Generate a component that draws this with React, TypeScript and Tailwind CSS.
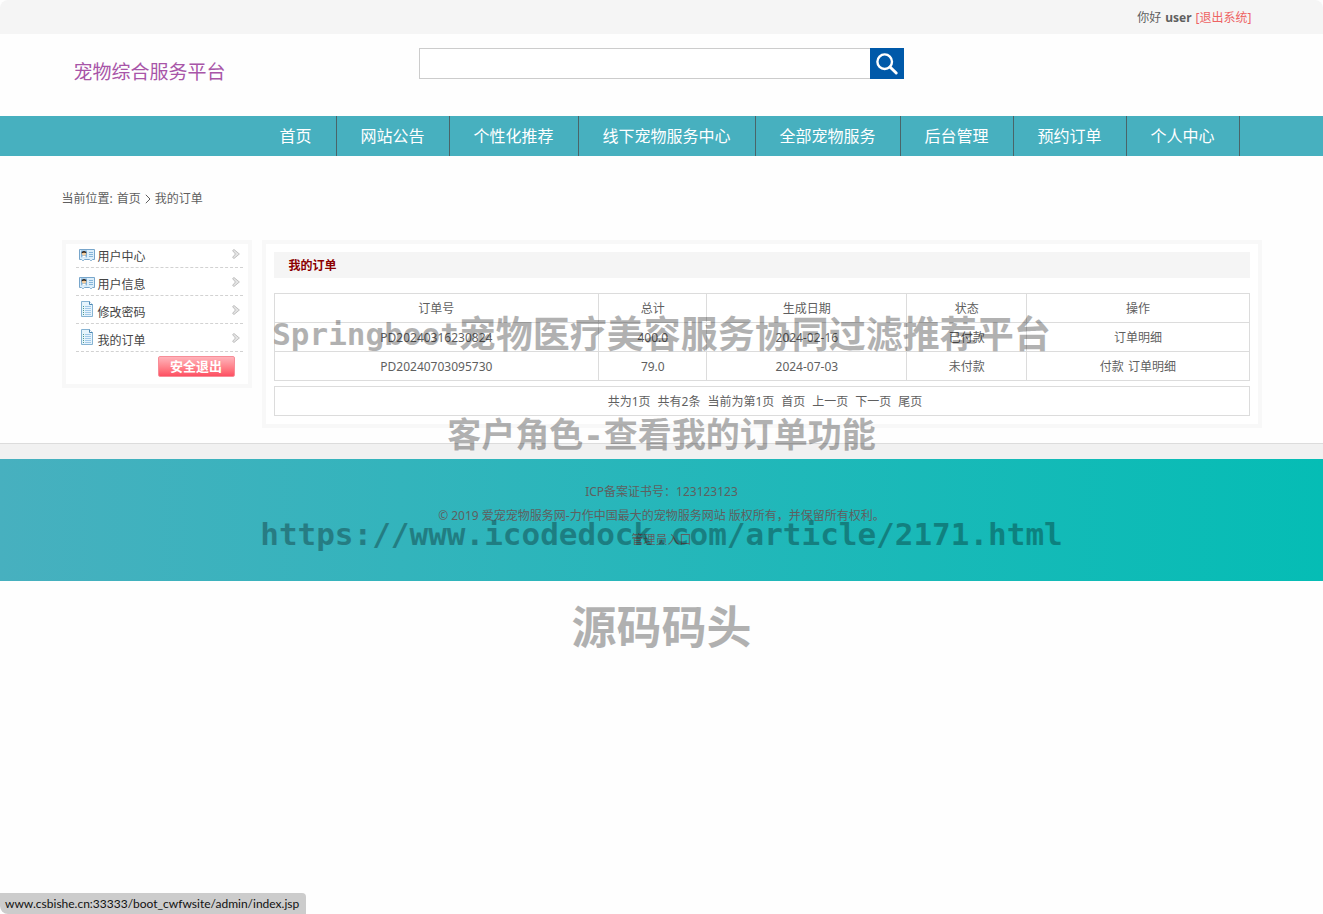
import React from "react";

const navItems = ["首页", "网站公告", "个性化推荐", "线下宠物服务中心", "全部宠物服务", "后台管理", "预约订单", "个人中心"];

const sideItems = [
  { label: "用户中心", icon: "card" },
  { label: "用户信息", icon: "card" },
  { label: "修改密码", icon: "doc" },
  { label: "我的订单", icon: "doc" },
];

const orders = [
  { id: "PD20240316230824", total: "400.0", date: "2024-02-16", status: "已付款", actions: ["订单明细"] },
  { id: "PD20240703095730", total: "79.0", date: "2024-07-03", status: "未付款", actions: ["付款", "订单明细"] },
];

function CardIcon() {
  return (
    <svg width="16" height="16" viewBox="0 0 16 16" aria-hidden="true">
      <path d="M.5 2.5h15v10h-2l-1 1h-1l-1-1h-5l-1 1h-1l-1-1h-2z" fill="#dceefa" stroke="#78a6cb" />
      <rect x="2" y="3.5" width="6" height="7" fill="#7fb2dc" />
      <circle cx="5" cy="6.600" r="2.200" fill="#f6cfa0" />
      <path d="M2.600 6.600C2 3 8 3 7.400 6.600 7 5.600 3.600 5.400 2.600 6.600z" fill="#2e2218" />
      <path d="M2.500 10.500c.5-2 4.500-2 5 0z" fill="#fff" />
      <path d="M10 5.500h4M10 7.500h4M10 9.500h4" stroke="#86b5d9" />
    </svg>
  );
}

function DocIcon() {
  return (
    <svg width="16" height="16" viewBox="0 0 16 16" aria-hidden="true">
      <path d="M2.5.5h8l3 3v12h-11z" fill="#e6f4fc" stroke="#86b3d3" />
      <path d="M10.5.5v3h3" fill="#fff" stroke="#4a86b3" />
      <path d="M4 5.5h1M4 7.5h1M4 9.5h1M4 11.5h1M4 13.5h1" stroke="#4f9a8c" />
      <path d="M6 5.5h6M6 7.5h6M6 9.5h6M6 11.5h6M6 13.5h6" stroke="#a3c9e8" />
    </svg>
  );
}

function ArrowIcon() {
  return (
    <svg width="8" height="10" viewBox="0 0 8 10" aria-hidden="true">
      <path d="M.6 1.6 2 .5 7.4 5 2 9.5.6 8.4 3.4 5z" fill="#e4e4e4" stroke="#b4b4b4" strokeWidth=".8" />
    </svg>
  );
}

export default function App() {
  return (
    <div className="relative min-h-screen bg-[#fefefe] font-['Noto_Sans','Noto_Sans_CJK_SC',sans-serif] text-xs text-[#5f5f5f]">
      <div className="rounded-t-lg bg-[#f5f5f5]">
        <div className="mx-auto flex h-[34px] max-w-[1200px] items-center justify-end gap-1 pt-[2px] pr-[10px]">
          <span>你好</span>
          <b>user</b>
          <a href="#logout" className="text-[#ee6363]">[退出系统]</a>
        </div>
      </div>

      <header className="mx-auto flex h-[82px] max-w-[1200px] items-start pl-3">
        <h1 className="mt-[23px] w-[345px] text-[19px] leading-[30px] text-[#a855a8]">宠物综合服务平台</h1>
        <form className="mt-[14px] flex" onSubmit={(e) => e.preventDefault()}>
          <input type="text" aria-label="搜索" className="h-[31px] w-[451px] border border-r-0 border-[#ccc] bg-white px-2 outline-none" />
          <button type="submit" aria-label="搜索" className="flex h-[31px] w-[34px] items-center justify-center bg-[#0059a9]">
            <svg width="24" height="24" viewBox="0 0 24 24" fill="none" stroke="#fff" aria-hidden="true">
              <circle cx="9.7" cy="9.7" r="7.3" strokeWidth="2.4" />
              <path d="m15 15 6.2 6" strokeWidth="3" strokeLinecap="round" />
            </svg>
          </button>
        </form>
      </header>

      <nav className="bg-[#47b0bf]">
        <ul className="mx-auto flex h-10 max-w-[1200px] pl-[194px]">
          {navItems.map((item) => (
            <li key={item} className="border-r border-[#4a6468]">
              <a href="#nav" className="block px-6 text-base leading-10 whitespace-nowrap text-white">{item}</a>
            </li>
          ))}
        </ul>
      </nav>

      <div className="mx-auto flex h-[84px] max-w-[1200px] items-center gap-1 pt-[2px]">
        <span>当前位置:</span>
        <a href="#home">首页</a>
        <svg width="6" height="10" viewBox="0 0 6 10" fill="none" stroke="#5f5f5f" aria-hidden="true">
          <path d="M.8.8 5 5 .8 9.200" />
        </svg>
        <span>我的订单</span>
      </div>

      <main className="mx-auto flex max-w-[1200px] items-start gap-[10px]">
        <aside className="w-[190px] shrink-0 border-4 border-[#f8f8f8] bg-white pr-[5px] pb-[7px] pl-[10px]">
          <ul>
            {sideItems.map((item) => (
              <li key={item.label} className="border-b border-dashed border-[#d2d2d2] pt-1 first:pt-0">
                <a href="#side" className="flex h-[23px] items-start px-[3px] text-[#444]">
                  <span className={item.icon === "card" ? "mt-[3px]" : "mt-px"}>{item.icon === "card" ? <CardIcon /> : <DocIcon />}</span>
                  <span className="ml-[3px] grow leading-[26px]">{item.label}</span>
                  <span className="mt-[5px]"><ArrowIcon /></span>
                </a>
              </li>
            ))}
          </ul>
          <div className="flex justify-end pt-1 pr-2">
            <button className="h-[21px] w-[77px] rounded-xs border border-[#f88d98] bg-linear-to-b from-[#ffb3bb] to-[#fd4e62] text-[13px] leading-[19px] font-bold text-white">安全退出</button>
          </div>
        </aside>

        <section className="min-w-0 grow border-4 border-[#f8f8f8] bg-white p-2">
          <h2 className="bg-[#f5f5f5] pt-[2px] pl-[15px] leading-6 font-bold text-[#8b0000]">我的订单</h2>
          <table className="mt-[15px] w-full table-fixed border-collapse text-center">
            <colgroup>
              <col className="w-[33.3%]" />
              <col className="w-[11.1%]" />
              <col className="w-[20.5%]" />
              <col className="w-[12.3%]" />
              <col />
            </colgroup>
            <thead>
              <tr>
                {["订单号", "总计", "生成日期", "状态", "操作"].map((h) => (
                  <th key={h} className="h-[29px] border border-[#dcdcdc] p-0 pt-[2px] font-normal">{h}</th>
                ))}
              </tr>
            </thead>
            <tbody>
              {orders.map((o) => (
                <tr key={o.id}>
                  <td className="h-[29px] border border-[#dcdcdc] p-0 pt-[2px]">{o.id}</td>
                  <td className="border border-[#dcdcdc] p-0 pt-[2px]">{o.total}</td>
                  <td className="border border-[#dcdcdc] p-0 pt-[2px]">{o.date}</td>
                  <td className="border border-[#dcdcdc] p-0 pt-[2px]">{o.status}</td>
                  <td className="border border-[#dcdcdc] p-0 pt-[2px]">
                    <div className="flex justify-center gap-1">
                      {o.actions.map((a) => <a key={a} href="#order">{a}</a>)}
                    </div>
                  </td>
                </tr>
              ))}
            </tbody>
          </table>
          <div className="mt-[5px] flex justify-center gap-[7px] border border-[#dcdcdc] pt-[2px] pl-[7px] leading-[26px]">
            <span>共为1页</span>
            <span>共有2条</span>
            <span>当前为第1页</span>
            <a href="#first">首页</a>
            <a href="#prev">上一页</a>
            <a href="#next">下一页</a>
            <a href="#last">尾页</a>
          </div>
        </section>
      </main>

      <div className="mt-[15px] h-4 border-t border-[#dcdcdc] bg-[#f1f1f1]" />
      <footer className="bg-linear-to-r/srgb from-[#47b0bf] to-[#05bdb5] pt-[21px] pb-[29px] text-center leading-6">
        <p>ICP备案证书号：123123123</p>
        <p>© 2019 爱宠宠物服务网-力作中国最大的宠物服务网站 版权所有，并保留所有权利。</p>
        <p><a href="#admin">管理员入口</a></p>
      </footer>

      <div className="pointer-events-none absolute inset-x-0 top-[285px] text-center font-['DejaVu_Sans_Mono','Noto_Sans_CJK_SC',monospace] font-bold whitespace-nowrap text-black opacity-30">
        <p className="flex h-[100px] items-center justify-center text-[37px]">
          <span className="text-[31px]">Springboot</span>
          <span className="pt-[2px]">宠物医疗美容服务协同过滤推荐平台</span>
        </p>
        <p className="flex h-[100px] items-center justify-center pt-[2px] text-[34px]">客户角色-查看我的订单功能</p>
        <p className="flex h-[100px] items-center justify-center text-[31px]">https://www.icodedock.com/article/2171.html</p>
        <p className="flex h-[86px] items-center justify-center pt-[2px] text-[45px]">源码码头</p>
      </div>

      <div className="fixed bottom-0 left-0 rounded-tr rounded-bl-lg bg-[#ccc] pr-[7px] pl-[5px] font-['Lato',sans-serif] text-xs leading-[21px] text-[#111]">
        www.csbishe.cn:33333/boot_cwfwsite/admin/index.jsp
      </div>
    </div>
  );
}
